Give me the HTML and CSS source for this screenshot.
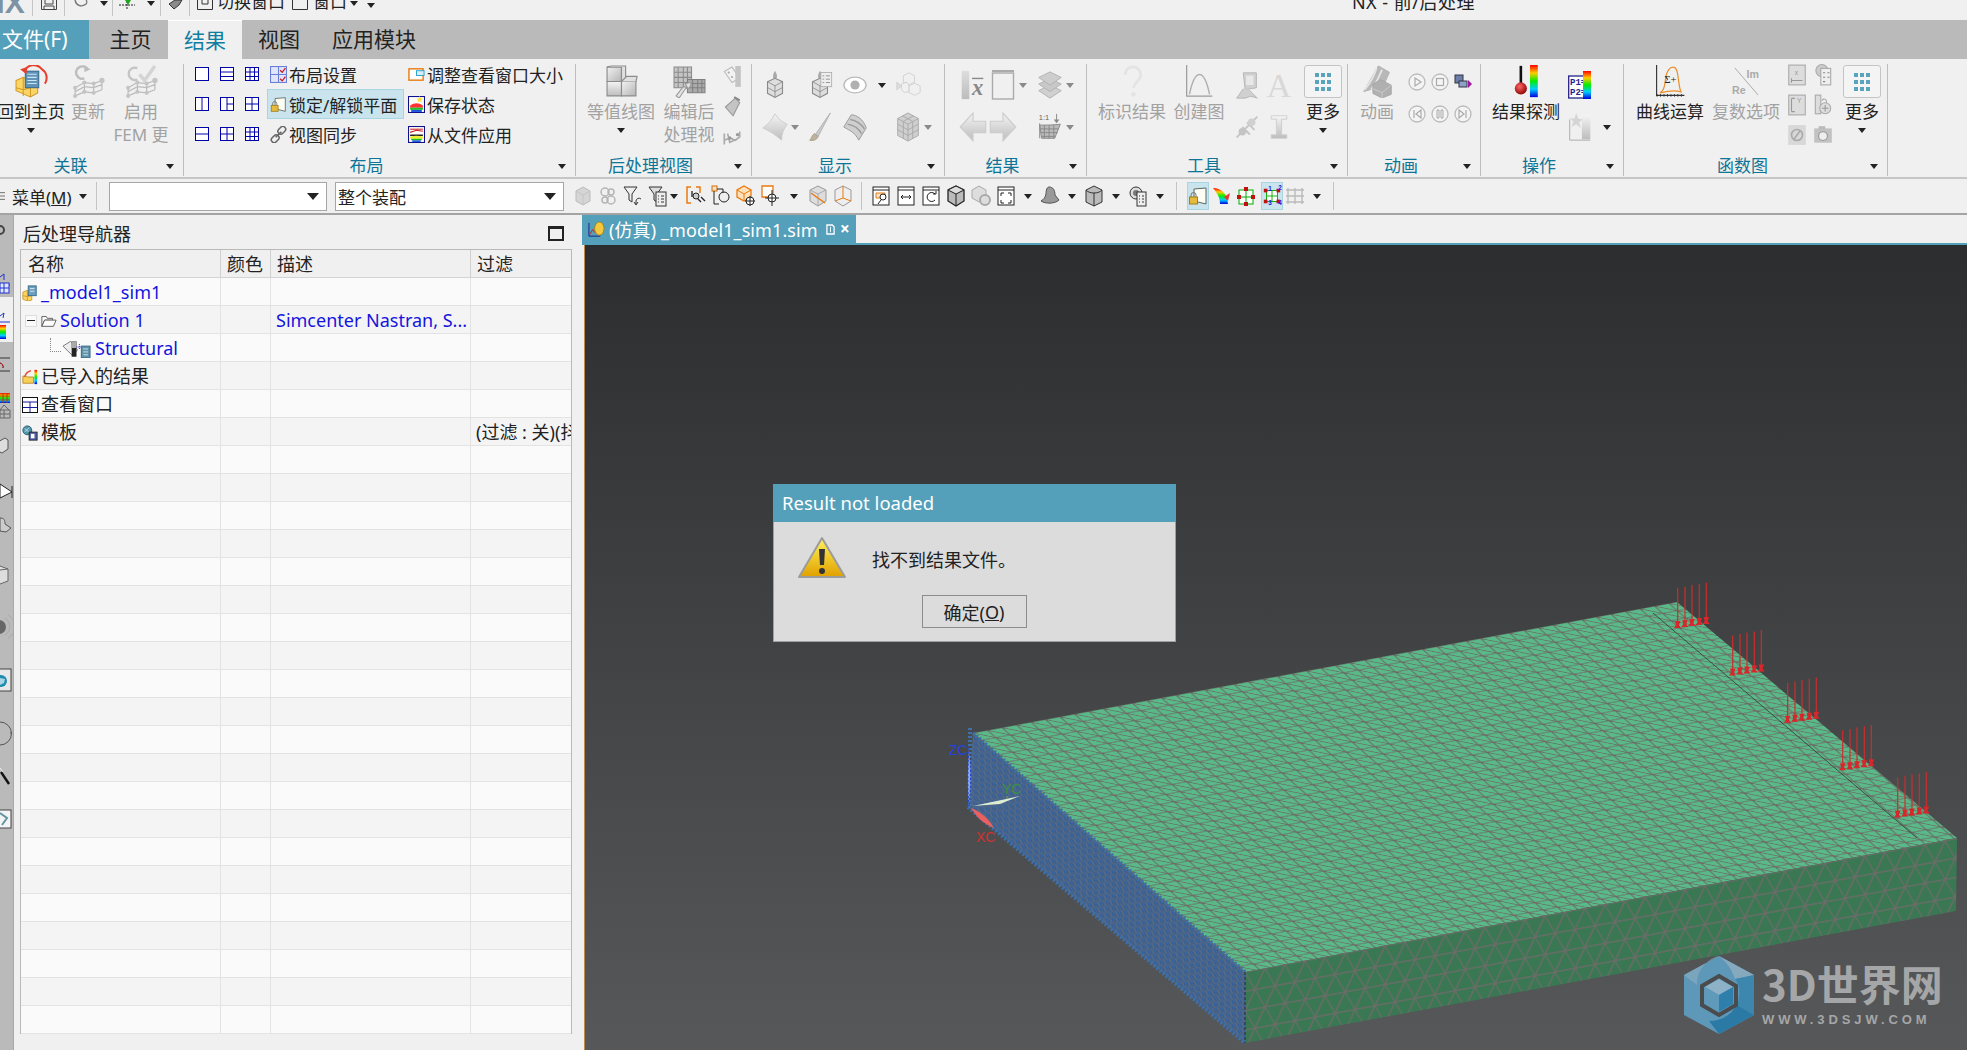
FILE: index.html
```html
<!DOCTYPE html>
<html lang="zh">
<head>
<meta charset="utf-8">
<title>NX - 前/后处理</title>
<link rel="stylesheet" href="styles.css">
</head>
<body>
<svg class="defs" xmlns="http://www.w3.org/2000/svg">
<defs>
<linearGradient id="gg" x1="0" y1="0" x2="1" y2="1"><stop offset="0" stop-color="#f2f2f2"/><stop offset="1" stop-color="#b4b4b4"/></linearGradient>
<linearGradient id="gv" x1="0" y1="0" x2="0" y2="1"><stop offset="0" stop-color="#f4f4f4"/><stop offset="1" stop-color="#bdbdbd"/></linearGradient>
<linearGradient id="rb" x1="0" y1="0" x2="0" y2="1"><stop offset="0" stop-color="#f00"/><stop offset=".25" stop-color="#fc0"/><stop offset=".5" stop-color="#0e0"/><stop offset=".75" stop-color="#0cf"/><stop offset="1" stop-color="#00d"/></linearGradient>
<radialGradient id="ball" cx=".4" cy=".35" r=".7"><stop offset="0" stop-color="#f66"/><stop offset="1" stop-color="#800"/></radialGradient>
<linearGradient id="warn" x1="0" y1="0" x2="0" y2="1"><stop offset="0" stop-color="#fff35a"/><stop offset="1" stop-color="#e0a000"/></linearGradient>
<symbol id="s-home" viewBox="0 0 32 32"><path d="M1 15l7-3 7 3v7l7-2 0 7-7 4-7-3-7-3z" fill="#fbd566" stroke="#d39a25"/><path d="M8 12v18M1 22l7 2 7-2M15 15v16" stroke="#d39a25" fill="none"/><rect x="10" y="6" width="13" height="16" fill="#5f93b8" stroke="#37688c"/><path d="M12 9h9M12 12h9M12 15h9M12 18h9" stroke="#cfe6f2"/><path d="M9 6a10 10 0 0 1 17-2 10 10 0 0 1 3 14" fill="none" stroke="#e8402c" stroke-width="2"/><path d="M5 4l7-2-1 7z" fill="#e8402c"/></symbol>
<symbol id="s-mesh" viewBox="0 0 32 32"><path d="M3 22l9-5 9 1 8-3M3 30l9-4 9 1 8-3M3 22v8M12 17v9M21 18v9M29 15v9M3 26l9-5 9 1 8-3" stroke="#bbb" fill="none" stroke-width="1.2"/><g fill="#c4c4c4"><circle cx="3" cy="22" r="2"/><circle cx="12" cy="17" r="2"/><circle cx="21" cy="18" r="2"/><circle cx="29" cy="15" r="2.600"/><circle cx="12" cy="26" r="2"/><circle cx="21" cy="27" r="2"/><circle cx="3" cy="30" r="2"/></g></symbol>
<symbol id="s-update" viewBox="0 0 32 32"><use href="#s-mesh"/><path d="M15 4a6 6 0 1 0-3 9" fill="none" stroke="#bdbdbd" stroke-width="2.400"/><path d="M12 1l6 3-6 3z" fill="#bdbdbd"/></symbol>
<symbol id="s-fem" viewBox="0 0 32 32"><use href="#s-mesh"/><path d="M12 3a6 6 0 1 0 0 11" fill="none" stroke="#c4c4c4" stroke-width="2.200"/><path d="M14 9l5 6L29 1" fill="none" stroke="#d4d4d4" stroke-width="3.400"/></symbol>
<symbol id="v1" viewBox="0 0 14 14"><rect x=".5" y=".5" width="13" height="13" fill="#fff" stroke="#00a" /></symbol>
<symbol id="v2" viewBox="0 0 14 14"><rect x=".5" y=".5" width="13" height="13" fill="#fff" stroke="#00a"/><path d="M0 5h14M0 9.500h14" stroke="#00a"/></symbol>
<symbol id="v3" viewBox="0 0 14 14"><rect x=".5" y=".5" width="13" height="13" fill="#fff" stroke="#00a"/><path d="M5 0v14M9.500 0v14M0 5h14M0 9.500h14" stroke="#00a"/></symbol>
<symbol id="v4" viewBox="0 0 14 14"><rect x=".5" y=".5" width="13" height="13" fill="#fff" stroke="#00a"/><path d="M7 0v14" stroke="#00a"/></symbol>
<symbol id="v5" viewBox="0 0 14 14"><rect x=".5" y=".5" width="13" height="13" fill="#fff" stroke="#00a"/><path d="M7 0v14M7 7h7" stroke="#00a"/></symbol>
<symbol id="v6" viewBox="0 0 14 14"><rect x=".5" y=".5" width="13" height="13" fill="#fff" stroke="#00a"/><path d="M7 0v14M0 7h14" stroke="#00a"/></symbol>
<symbol id="v7" viewBox="0 0 14 14"><rect x=".5" y=".5" width="13" height="13" fill="#fff" stroke="#00a"/><path d="M0 7h14" stroke="#00a"/></symbol>
<symbol id="s-layoutset" viewBox="0 0 16 16"><rect x=".5" y=".5" width="15" height="15" fill="#dfe6fb" stroke="#6a7fd8"/><path d="M8 0v16M0 8h16" stroke="#6a7fd8"/><path d="M9.500 4l2 2 3-4M9.500 12l2 2 3-4" fill="none" stroke="#d01818" stroke-width="1.200"/></symbol>
<symbol id="s-lock" viewBox="0 0 20 20"><path d="M6 3l12-1v16L6 15z" fill="#fdfdf4" stroke="#5d6760"/><path d="M3 11V9a2.500 2.500 0 0 1 5 0v2" fill="none" stroke="#777"/><rect x="1.500" y="11" width="8" height="7" fill="#e6bb3c" stroke="#a27f1d"/></symbol>
<symbol id="s-link" viewBox="0 0 18 18"><g fill="none" stroke="#666" stroke-width="1.600"><rect x="8" y="1.500" width="9" height="6" rx="3" transform="rotate(-45 12.500 4.500)"/><rect x="1" y="10.500" width="9" height="6" rx="3" transform="rotate(-45 5.500 13.500)"/><path d="M6 12l6-6"/></g></symbol>
<symbol id="s-resize" viewBox="0 0 18 16"><rect x="1" y="2" width="15" height="12" fill="#fff" stroke="#e87b10" stroke-width="1.500"/><rect x="9" y="4" width="8" height="5" fill="#d8eefa" stroke="#28a0c8"/></symbol>
<symbol id="s-save" viewBox="0 0 16 16"><rect x=".5" y=".5" width="15" height="15" fill="#fff" stroke="#10108a"/><path d="M2 9c4-3 8-3 12 0v2H2z" fill="#f33"/><path d="M2 11h12v2H2z" fill="#1ac41a"/><path d="M3 13h10v2H3z" fill="#1a50e0"/><path d="M11 0l1 2 2 .5-1.500 1.500.5 2-2-1-2 1 .5-2L8 2.500 10 2z" fill="#ffe23a"/></symbol>
<symbol id="s-apply" viewBox="0 0 16 16"><rect x=".5" y=".5" width="15" height="15" fill="#fff" stroke="#10108a"/><path d="M2 3h12" stroke="#c22"/><path d="M2 6l6-2 6 1" stroke="#c22" fill="none"/><path d="M2 8h12v1.500H2z" fill="#222"/><path d="M2 10c4-1 8-1 12 0v2H2z" fill="#ee3"/><path d="M3 12h10v1.500H3z" fill="#1ac41a"/><path d="M4 13.500h8V15H4z" fill="#1a50e0"/></symbol>
<symbol id="s-contour" viewBox="0 0 32 32"><g stroke="#8c8c8c" stroke-width="1.100"><path d="M2 16h14V2H2z" fill="url(#gg)"/><path d="M2 2l4-1h14v14l-4 1V2" fill="#e0e0e0"/><path d="M2 30h14V16H2z" fill="url(#gv)"/><path d="M16 30h14V16H16z" fill="url(#gg)"/><path d="M16 16l5-5h10v1l-1 4" fill="#e0e0e0"/></g></symbol>
<symbol id="s-edit" viewBox="0 0 32 32"><path d="M1 2h17v20H1z" fill="#c4c4c4" stroke="#8a8a8a"/><path d="M1 7h17M1 12h17M1 17h17M5 2v20M10 2v20M14 2v20" stroke="#8a8a8a"/><path d="M14 14h17v13H14z" fill="#aaa" stroke="#808080"/><path d="M14 18h17M14 22h17M19 14v13M24 14v13M28 14v13" stroke="#808080"/><path d="M3 30l7-9 4 1-2-4 6-1-2 5-4 1-6 9z" fill="#e4e4e4" stroke="#999"/></symbol>
<symbol id="s-tag" viewBox="0 0 16 20"><path d="M1 5l7-4 7 10-7 4z" fill="#f2f2f2" stroke="#bbb"/><rect x="11" y="0" width="5" height="19" fill="#c4c4c4"/><g fill="#aaa"><circle cx="5" cy="6" r="1"/><circle cx="8" cy="10" r="1"/></g></symbol>
<symbol id="s-brushg" viewBox="0 0 16 20"><path d="M2 10l9-8 4 4-6 12z" fill="#c4c4c4" stroke="#999"/><path d="M10 1l5 3" stroke="#888" stroke-width="2"/></symbol>
<symbol id="s-part" viewBox="0 0 16 20"><path d="M1 6v10M1 12l5-2 5 2 4-3v-5M4 6l2 8 4-2" stroke="#aaa" fill="none" stroke-width="1.500"/><g fill="#999"><circle cx="6" cy="10" r="1.500"/><circle cx="13" cy="7" r="1.500"/></g></symbol>
<symbol id="s-tower" viewBox="0 0 30 36"><path d="M15 1c2 3 3 6 2 9h-4c-1-3 0-6 2-9z" fill="#aaa"/><path d="M6 14l9-4 9 4v14l-9 5-9-5z" fill="#dedede" stroke="#8a8a8a" stroke-width="1.300"/><path d="M6 14l9 5 9-5M15 19v14M6 21l9 5 9-5" stroke="#8a8a8a" fill="none"/></symbol>
<symbol id="s-towerl" viewBox="0 0 30 36"><use href="#s-tower"/><rect x="16" y="3" width="13" height="17" fill="#eee" stroke="#aaa"/><path d="M18 7h2M22 7h5M18 11h2M22 11h5M18 15h2M22 15h5" stroke="#888"/></symbol>
<symbol id="s-eye" viewBox="0 0 26 20"><ellipse cx="13" cy="10" rx="12" ry="8.500" fill="#fff" stroke="#bbb" stroke-width="1.500"/><circle cx="13" cy="10" r="5" fill="#b0b0b0"/></symbol>
<symbol id="s-cubesl" viewBox="0 0 30 32"><g fill="#f0f0f0" stroke="#d0d0d0"><path d="M10 6l6-3 6 3v7l-6 3-6-3z"/><path d="M16 17l6-3 6 3v7l-6 3-6-3z"/><path d="M3 13l5 4-5 4z" fill="#ddd"/><path d="M8 15l6-2 2 3v7l-5 1-3-3z"/></g></symbol>
<symbol id="s-surf" viewBox="0 0 28 32"><path d="M14 2c3 5 8 9 13 11-4 5-6 11-6 17C14 24 8 20 1 17 7 13 11 8 14 2z" fill="url(#gv)" stroke="#ccc"/></symbol>
<symbol id="s-brush" viewBox="0 0 26 32"><path d="M24 1L8 24l3 2z" fill="#ccc" stroke="#b0b0b0"/><path d="M7 23c-3 2-3 6-5 7 3 1 8 0 9-4z" fill="#bdb29c" stroke="#a8a08c"/></symbol>
<symbol id="s-wave" viewBox="0 0 28 32"><path d="M10 3c6 0 13 5 16 14l-8 13C14 22 9 20 2 16z" fill="#cfcfcf" stroke="#999"/><path d="M6 13c6 1 11 3 15 10M9 8c6 1 11 4 15 10" stroke="#9a9a9a" fill="none" stroke-width="1.400"/></symbol>
<symbol id="s-cube3" viewBox="0 0 26 32"><path d="M13 1l11 6v18l-11 6-11-6V7z" fill="#cfcfcf" stroke="#aaa"/><path d="M2 7l11 6 11-6M13 13v18M2 13l11 6 11-6M2 19l11 6 11-6M7 4l11 6v18M19 4L8 10v18" stroke="#aaa" fill="none"/></symbol>
<symbol id="s-xbar" viewBox="0 0 24 32"><rect x="0" y="1" width="8" height="30" fill="url(#gv)"/><rect x="0" y="1" width="8" height="30" fill="#bbb" opacity=".4"/><path d="M11 9h12" stroke="#888" stroke-width="1.500"/><text x="11" y="27" class="ix">x</text></symbol>
<symbol id="s-box" viewBox="0 0 24 30"><path d="M1 1h22" stroke="#aaa" stroke-width="2"/><rect x="1.500" y="3" width="21" height="26" fill="#f0f0f0" stroke="#aaa" stroke-width="1.400"/></symbol>
<symbol id="s-layers" viewBox="0 0 26 32"><g fill="#d0d0d0" stroke="#b0b0b0"><path d="M13 16l12 6-12 8-12-8z"/><path d="M13 9l12 6-12 8-12-8z" fill="#c8c8c8"/><path d="M13 2l12 6-12 8L1 8z" fill="#cdcdcd"/></g></symbol>
<symbol id="s-aleft" viewBox="0 0 24 26"><path d="M1 13L12 1v7h11v10H12v7z" fill="url(#gv)" stroke="#ccc"/></symbol>
<symbol id="s-aright" viewBox="0 0 24 26"><path d="M23 13L12 1v7H1v10h11v7z" fill="url(#gv)" stroke="#ccc"/></symbol>
<symbol id="s-scale" viewBox="0 0 26 32"><text x="1" y="9" class="it">1:1</text><path d="M20 2v8" stroke="#888"/><path d="M17 8h6l-3 4z" fill="#888"/><path d="M2 12v16M2 14c8 0 14 0 22-1l-6 15H4z" fill="#bbb" stroke="#888"/><path d="M2 18h20M3 22h18M4 26h14M7 14v14M12 14v14M17 14v14" stroke="#888"/></symbol>
<symbol id="s-q" viewBox="0 0 24 36"><path d="M4 11c0-12 17-12 17 0 0 6-7 7-8 14" fill="none" stroke="#e4e4e4" stroke-width="3"/><circle cx="13" cy="32" r="2.500" fill="#e4e4e4"/></symbol>
<symbol id="s-chart" viewBox="0 0 30 36"><path d="M1 0v34h28" fill="none" stroke="#9a9a9a" stroke-width="1.300"/><path d="M4 32C10 3 20 3 26 32" fill="none" stroke="#b0b0b0" stroke-width="1.600"/></symbol>
<symbol id="s-cam" viewBox="0 0 28 32"><path d="M10 3h14v16l-12 2z" fill="#d0d0d0" stroke="#b5b5b5"/><path d="M13 6h8v10h-8z" fill="#e8e8e8"/><path d="M10 20l-7 10h9l6-2 7 2-9-9" fill="#d0d0d0" stroke="#b5b5b5"/></symbol>
<symbol id="s-nodes" viewBox="0 0 28 32"><path d="M3 27L25 5M9 16l8 8M14 11l8 8" stroke="#c4c4c4" stroke-width="2"/><circle cx="9" cy="21" r="4" fill="#c4c4c4"/><circle cx="19" cy="11" r="4" fill="#d0d0d0"/></symbol>
<symbol id="s-A" viewBox="0 0 26 32"><text x="0" y="29" class="iA">A</text></symbol>
<symbol id="s-I" viewBox="0 0 22 30"><path d="M2 2h18v4h-6v18h6v4H2v-4h6V6H2z" fill="url(#gv)" stroke="#ccc"/></symbol>
<symbol id="s-more" viewBox="0 0 16 18"><g fill="#5aa3bd"><rect width="4" height="4"/><rect x="6" width="4" height="4"/><rect x="12" width="4" height="4"/><rect y="7" width="4" height="4"/><rect x="6" y="7" width="4" height="4"/><rect x="12" y="7" width="4" height="4"/><rect y="14" width="4" height="4"/><rect x="6" y="14" width="4" height="4"/><rect x="12" y="14" width="4" height="4"/></g></symbol>
<symbol id="s-anim" viewBox="0 0 34 36"><path d="M18 1l12 7-8 18-10 0-10 3z" fill="#b8b8b8" stroke="#b0b0b0"/><path d="M16 3c-2 8-5 14-13 24M22 5c-3 8-6 14-12 22" stroke="#e4e4e4" stroke-width="2" fill="none"/><path d="M12 21l8-5 12 6v10l-10 4-10-5z" fill="#b0b0b0" stroke="#a4a4a4"/><path d="M12 26l10 4 10-8M22 30v6" stroke="#ccc" fill="none"/></symbol>
<symbol id="s-play" viewBox="0 0 18 18"><circle cx="9" cy="9" r="8" fill="#f4f4f4" stroke="#bbb" stroke-width="1.300"/><path d="M7 5l6 4-6 4z" fill="none" stroke="#aaa" stroke-width="1.200"/></symbol>
<symbol id="s-stop" viewBox="0 0 18 18"><circle cx="9" cy="9" r="8" fill="#f4f4f4" stroke="#bbb" stroke-width="1.300"/><rect x="5.500" y="5.500" width="7" height="7" fill="none" stroke="#aaa" stroke-width="1.200"/></symbol>
<symbol id="s-prev" viewBox="0 0 18 18"><circle cx="9" cy="9" r="8" fill="#f4f4f4" stroke="#bbb" stroke-width="1.300"/><path d="M6 5v8M13 5L8 9l5 4z" fill="none" stroke="#aaa" stroke-width="1.200"/></symbol>
<symbol id="s-pause" viewBox="0 0 18 18"><circle cx="9" cy="9" r="8" fill="#f4f4f4" stroke="#bbb" stroke-width="1.300"/><path d="M6 5h2v8H6zM10 5h2v8h-2z" fill="none" stroke="#aaa"/></symbol>
<symbol id="s-next" viewBox="0 0 18 18"><circle cx="9" cy="9" r="8" fill="#f4f4f4" stroke="#bbb" stroke-width="1.300"/><path d="M12 5v8M5 5l5 4-5 4z" fill="none" stroke="#aaa" stroke-width="1.200"/></symbol>
<symbol id="s-rec" viewBox="0 0 18 18"><rect x="1" y="2" width="8" height="8" fill="#6d7fa8" stroke="#334"/><rect x="5" y="8" width="8" height="6" fill="#8ca2c5" stroke="#334"/><path d="M14 7l4 4-4 4z" fill="#a018a0"/></symbol>
<symbol id="s-probe" viewBox="0 0 32 38"><rect x="8" y="1" width="3" height="20" fill="#111"/><circle cx="9.500" cy="27" r="7" fill="url(#ball)"/><rect x="20" y="0" width="9" height="37" fill="url(#rb)"/></symbol>
<symbol id="s-p12" viewBox="0 0 24 30"><rect x=".7" y="6" width="17" height="22" fill="#fff" stroke="#22228a" stroke-width="1.300"/><text x="2" y="15" class="ip">P1=</text><text x="2" y="25" class="ip">P2=</text><rect x="15" y="1" width="8" height="28" fill="url(#rb)"/></symbol>
<symbol id="s-star" viewBox="0 0 24 32"><rect x="14" y="3" width="9" height="26" fill="url(#gv)"/><path d="M1 8v22h22" fill="none" stroke="#aaa"/><path d="M8 1l2 6 5 1-4 3 2 6-5-4-5 3 2-6-4-3h5z" fill="#d5d5d5"/></symbol>
<symbol id="s-sigma" viewBox="0 0 34 38"><path d="M1 0v35h32" fill="none" stroke="#333" stroke-width="1.300"/><path d="M1 35h32" stroke="#333" stroke-dasharray="1 3" stroke-width="3"/><path d="M5 32C8 30 10 28 11 18 12 6 17 1 22 3c5 3 3 18 7 28-6-2-15-1-24 1z" fill="none" stroke="#e8902c" stroke-width="1.400"/><text x="10" y="21" class="is">Σ+</text></symbol>
<symbol id="s-imre" viewBox="0 0 30 34"><path d="M3 3l24 28" stroke="#aaa"/><text x="15" y="13" class="ii">Im</text><text x="0" y="30" class="ii">Re</text></symbol>
<symbol id="s-gx" viewBox="0 0 16 20"><rect x=".5" y="1" width="15" height="18" fill="#ddd" stroke="#aaa"/><path d="M3 15h10M3 13v4" stroke="#999"/><text x="6" y="10" class="ig">x</text></symbol>
<symbol id="s-gy" viewBox="0 0 16 20"><rect x=".5" y="1" width="15" height="18" fill="#ddd" stroke="#aaa"/><path d="M3 4v12M3 4h3M3 16h3" stroke="#999"/><text x="8" y="8" class="ig">Y</text></symbol>
<symbol id="s-gl" viewBox="0 0 16 20"><circle cx="7" cy="6" r="5.500" fill="#ccc" stroke="#aaa"/><rect x="6" y="4" width="9" height="15" fill="#eee" stroke="#aaa"/><path d="M8 8h2M12 8h2M8 12h2M12 12h2M8 16h2" stroke="#888"/></symbol>
<symbol id="s-gr" viewBox="0 0 16 20"><rect x="1" y="1" width="5" height="17" fill="#ddd" stroke="#aaa"/><path d="M7 6c2-3 5-1 4 3" stroke="#aaa" fill="none"/><circle cx="10" cy="13" r="5" fill="#ddd" stroke="#aaa"/><path d="M10 10v6M7 13h6" stroke="#999"/></symbol>
<symbol id="s-gn" viewBox="0 0 16 20"><rect y="1" width="16" height="18" fill="#d8d8d8"/><circle cx="8" cy="10" r="5" fill="none" stroke="#aaa" stroke-width="1.500"/><path d="M5 14l6-8" stroke="#aaa" stroke-width="1.500"/></symbol>
<symbol id="s-gc" viewBox="0 0 16 20"><rect y="4" width="16" height="13" fill="#c2c2c2"/><rect x="4" y="2" width="6" height="3" fill="#bbb"/><circle cx="8" cy="11" r="4" fill="#eee" stroke="#999"/></symbol>

<symbol id="t-cube" viewBox="0 0 20 22"><path d="M10 2l7 4v10l-7 4-7-4V6z" fill="#d5d5d5" stroke="#bbb"/><path d="M3 6l7 4 7-4M10 10v10" stroke="#c5c5c5" fill="none"/></symbol>
<symbol id="t-chain" viewBox="0 0 20 22"><g fill="none" stroke="#b5b5b5" stroke-width="1.500"><circle cx="7" cy="7" r="4"/><circle cx="13" cy="15" r="4"/><circle cx="13" cy="7" r="3"/><circle cx="7" cy="15" r="3"/></g></symbol>
<symbol id="t-funnel" viewBox="0 0 20 22"><path d="M1 2h13L9 9v8l-3-2V9z" fill="#eee" stroke="#333"/><path d="M18 14a3 3 0 0 0-5 2v3M11 17l2 3 2-3" fill="none" stroke="#333"/></symbol>
<symbol id="t-flist" viewBox="0 0 20 22"><path d="M1 2h13L9 9v8l-3-2V9z" fill="#ddd" stroke="#333"/><rect x="8" y="7" width="10" height="14" fill="#eee" stroke="#333"/><path d="M10 11h1M13 11h3M10 14h1M13 14h3M10 17h1M13 17h3" stroke="#333"/></symbol>
<symbol id="t-brk" viewBox="0 0 20 22"><path d="M5 2H1v16h4M10 2h4v6" fill="none" stroke="#e87b10" stroke-width="1.500"/><path d="M6 6v6M9 11l6 6M15 12l4 4" stroke="#222" stroke-width="1.300"/><circle cx="10" cy="11" r="3" fill="#ccc" stroke="#222"/></symbol>
<symbol id="t-tree" viewBox="0 0 20 22"><rect x="1" y="1" width="5" height="5" fill="#f4e0c4" stroke="#d96a00"/><path d="M3 6v13h5" fill="none" stroke="#222"/><circle cx="13" cy="12" r="5" fill="#eee" stroke="#222"/><path d="M6 4h6v4" stroke="#222" fill="none"/></symbol>
<symbol id="t-obox" viewBox="0 0 20 22"><path d="M8 1l7 4v7l-7 4-7-4V5z" fill="#ffe2bc" stroke="#e87b10" stroke-width="1.300"/><path d="M1 5l7 4 7-4M8 9v7" stroke="#e87b10" fill="none"/><circle cx="14" cy="16" r="4" fill="#fff" stroke="#222"/><path d="M14 11v10M9 16h10" stroke="#222"/></symbol>
<symbol id="t-ocross" viewBox="0 0 20 22"><path d="M1 1h11v11H1z" fill="#fff" stroke="#e87b10" stroke-width="1.300"/><circle cx="11" cy="13" r="4" fill="#fff" stroke="#222"/><path d="M11 5v16M4 13h14" stroke="#222"/></symbol>
<symbol id="t-cslash" viewBox="0 0 20 22"><path d="M10 1l8 4v11l-8 5-8-5V5z" fill="#ddd" stroke="#999"/><path d="M2 5l8 4 8-4M10 9v12" stroke="#aaa" fill="none"/><path d="M3 8l14 10" stroke="#e87b10" stroke-width="1.500"/></symbol>
<symbol id="t-cor" viewBox="0 0 20 22"><path d="M10 1l8 4v11l-8 5-8-5V5z" fill="#eee" stroke="#999"/><path d="M10 1v12l-8 3M10 13l8 3" stroke="#e87b10" fill="none"/></symbol>
<symbol id="t-w1" viewBox="0 0 20 22"><rect x="2" y="2" width="16" height="18" fill="#fff" stroke="#222"/><path d="M2 5h16" stroke="#222"/><path d="M5 8h9v5H5z" fill="#f7e3c8" stroke="#e87b10"/><circle cx="12" cy="12" r="3" fill="#fff" stroke="#222"/><path d="M10 15l-3 4" stroke="#222"/></symbol>
<symbol id="t-w2" viewBox="0 0 20 22"><rect x="2" y="2" width="16" height="18" fill="#fff" stroke="#222"/><path d="M2 5h16M5 12h10M5 12l2-2M5 12l2 2M15 12l-2-2M15 12l-2 2" stroke="#222" fill="none"/></symbol>
<symbol id="t-w3" viewBox="0 0 20 22"><rect x="2" y="2" width="16" height="18" fill="#fff" stroke="#222"/><path d="M2 5h16" stroke="#222"/><path d="M14 9a4.500 4.500 0 1 0 0 6" fill="none" stroke="#222"/><path d="M12 9h3V6" fill="none" stroke="#222"/></symbol>
<symbol id="t-dcube" viewBox="0 0 20 22"><path d="M10 1l8 4v11l-8 5-8-5V5z" fill="#bbb" stroke="#222" stroke-width="1.300"/><path d="M2 5l8 4 8-4-8-4z" fill="#ddd" stroke="#222"/><path d="M10 9v12" stroke="#222"/></symbol>
<symbol id="t-gcube" viewBox="0 0 20 22"><path d="M8 1l7 4v8l-7 4-7-4V5z" fill="#ddd" stroke="#aaa"/><circle cx="14" cy="15" r="5" fill="#ddd" stroke="#aaa" stroke-width="2"/></symbol>
<symbol id="t-w4" viewBox="0 0 20 22"><rect x="2" y="2" width="16" height="18" fill="#fff" stroke="#222"/><path d="M2 5h16M5 8v3M5 8h3M15 8v3M15 8h-3M5 18v-3M5 18h3M15 18v-3M15 18h-3" stroke="#222" fill="none"/></symbol>
<symbol id="t-sweep" viewBox="0 0 20 22"><path d="M9 2c4 0 6 3 6 8l4 5c-4 4-14 4-18 1 3-2 4-3 5-7 0-4 1-7 3-7z" fill="#999" stroke="#555"/></symbol>
<symbol id="t-cyl" viewBox="0 0 20 22"><path d="M2 5l8-4 8 4v12l-8 4-8-4z" fill="#bbb" stroke="#333"/><path d="M2 5c3 4 13 4 16 0M10 8v13" stroke="#333" fill="none"/></symbol>
<symbol id="t-glist" viewBox="0 0 20 22"><circle cx="8" cy="8" r="6" fill="#ddd" stroke="#333"/><circle cx="8" cy="8" r="3" fill="#777"/><rect x="9" y="7" width="9" height="14" fill="#eee" stroke="#333"/><path d="M11 11h1M14 11h2M11 14h1M14 14h2M11 17h1M14 17h2" stroke="#333"/></symbol>
<symbol id="t-rain" viewBox="0 0 20 22"><path d="M2 3c8 0 14 5 15 16H9C9 12 6 8 2 3z" fill="url(#rb)"/><path d="M19 8l-6 4 4 4z" fill="#e33"/></symbol>
<symbol id="t-rgrid" viewBox="0 0 20 22"><rect x="3" y="5" width="14" height="14" fill="#fff" stroke="#0a0"/><path d="M10 5v14M3 12h14" stroke="#0a0"/><g fill="#c01010"><rect x="8" y="2" width="4" height="4"/><rect x="1" y="10" width="4" height="4"/><rect x="15" y="10" width="4" height="4"/><rect x="8" y="17" width="4" height="4"/></g></symbol>
<symbol id="t-nums" viewBox="0 0 22 22"><rect x="5" y="5" width="12" height="12" fill="#fff" stroke="#0a0"/><path d="M5 11h12M11 5v12" stroke="#0a0"/><g fill="#c01010"><rect x="2" y="3" width="4" height="4"/><rect x="16" y="3" width="4" height="4"/><rect x="2" y="15" width="4" height="4"/><rect x="16" y="15" width="4" height="4"/></g><text x="7" y="5" class="in">1</text><text x="18" y="4" class="in">2</text><text x="7" y="21" class="in">3</text><text x="18" y="21" class="in">4</text></symbol>
<symbol id="t-grid" viewBox="0 0 20 22"><path d="M3 3v16M10 3v16M17 3v16M1 5h18M1 11h18M1 17h18" stroke="#bbb" stroke-width="1.400"/></symbol>

<symbol id="n-root" viewBox="0 0 18 18"><path d="M1 8l5-2 5 2v9l-5 1-5-2z" fill="#fbd566" stroke="#d39a25"/><path d="M1 12l5 1 5-1M6 6v12" stroke="#d39a25" fill="none"/><rect x="7" y="1" width="9" height="11" fill="#6da0bf" stroke="#37688c"/><path d="M9 4h5M9 7h5" stroke="#d6ecf7"/></symbol>
<symbol id="n-folder" viewBox="0 0 18 16"><path d="M1 14V3h5l1 2h6v2H4z" fill="#fff" stroke="#555"/><path d="M1 14l3-7h13l-3 7z" fill="#fdfdfd" stroke="#555"/></symbol>
<symbol id="n-struct" viewBox="0 0 30 18"><path d="M1 6l8-5 7 9-5 6z" fill="#eee" stroke="#777"/><rect x="10" y="1" width="5" height="16" fill="#222"/><rect x="10" y="1" width="5" height="7" fill="#aaa"/><path d="M15 7h6M18 4v5" stroke="#2222cc" stroke-dasharray="1 1"/><rect x="20" y="6" width="9" height="12" fill="#5f93a8" stroke="#37688c"/><path d="M22 9h5M22 12h5M22 15h5" stroke="#cde"/></symbol>
<symbol id="n-imp" viewBox="0 0 18 18"><path d="M1 16V8h4l1 1h7v7z" fill="#f9cf58" stroke="#b48a26"/><path d="M3 9c1-4 3-6 7-7" stroke="#e0503c" stroke-width="1.600" fill="none"/><rect x="14" y="1" width="3" height="16" fill="url(#rb)"/></symbol>
<symbol id="n-view" viewBox="0 0 16 16"><rect x=".5" y=".5" width="15" height="15" fill="#fff" stroke="#111"/><path d="M1 5h14M1 10.500h14M8 5v10" stroke="#1b1b9c"/></symbol>
<symbol id="n-tpl" viewBox="0 0 18 18"><circle cx="6" cy="6" r="5" fill="#4f98a9" stroke="#23586b"/><path d="M3 4l6 5M3 8l5-5" stroke="#cde"/><rect x="8" y="8" width="9" height="9" fill="#4c5fa8" stroke="#222"/><rect x="10" y="10" width="4" height="5" fill="#fff"/></symbol>
</defs>
</svg>

<div class="app">
  <header class="titlebar">
    <span class="logo">NX</span>
    <span class="tsep tsep-a"></span>
    <svg class="qs-save" viewBox="0 0 16 10"><path d="M.5 0v9.500h15V0M4 0v4h8V0M3 9V6h10v3" fill="none" stroke="#444"/></svg>
    <span class="tsep tsep-b"></span>
    <svg class="qs-undo" viewBox="0 0 16 10"><path d="M3 0c1 5 6 8 11 4 1-1 1-3 0-4" fill="none" stroke="#777" stroke-width="1.400"/></svg>
    <i class="caret qs-c1"></i>
    <span class="tsep tsep-c"></span>
    <svg class="qs-green" viewBox="0 0 16 10"><path d="M0 5h16M8 1v9" stroke="#222" stroke-dasharray="2 1"/><path d="M6 0h6l-3 5z" fill="#1aa81a"/></svg>
    <i class="caret qs-c2"></i>
    <span class="tsep tsep-d"></span>
    <svg class="qs-brush" viewBox="0 0 16 10"><path d="M1 4l6-4h7l-3 5-5 4z" fill="#8a8a8a" stroke="#333"/></svg>
    <span class="tsep tsep-e"></span>
    <svg class="qs-win" viewBox="0 0 16 10"><path d="M.5 0v9.500h15V0M5 0v4h6V0" fill="none" stroke="#333"/></svg>
    <span class="ttxt t-switch">切换窗口</span>
    <svg class="qs-win2" viewBox="0 0 16 10"><path d="M.5 0v9.500h15V0" fill="none" stroke="#333"/></svg>
    <span class="ttxt t-win">窗口</span>
    <i class="caret qs-c3"></i>
    <i class="caret qs-c4"></i>
    <span class="ttxt t-app">NX - 前/后处理</span>
  </header>

  <nav class="tabs">
    <span class="tab tab-file">文件(F)</span>
    <span class="tab tab-w79">主页</span>
    <span class="tab tab-w74 tab-on">结果</span>
    <span class="tab tab-w74">视图</span>
    <span class="tab tab-w116">应用模块</span>
  </nav>

  <section class="ribbon">
    <div class="grp g1">
      <div class="body">
        <div class="big w62"><svg class="ic32"><use href="#s-home"/></svg><span class="lb">回到主页</span><i class="caret"></i></div>
        <div class="big w52 dim"><svg class="ic32"><use href="#s-update"/></svg><span class="lb">更新</span></div>
        <div class="big w54 dim"><svg class="ic32"><use href="#s-fem"/></svg><span class="lb">启用</span><span class="lb nowrap">FEM 更</span></div>
      </div>
      <div class="foot"><span class="gname">关联</span><span class="fcar"><i class="caret"></i></span></div>
    </div>

    <div class="grp g2">
      <div class="body body-up">
        <div class="viewgrid">
          <svg class="ic14"><use href="#v1"/></svg><svg class="ic14"><use href="#v2"/></svg><svg class="ic14"><use href="#v3"/></svg>
          <svg class="ic14"><use href="#v4"/></svg><svg class="ic14"><use href="#v5"/></svg><svg class="ic14"><use href="#v6"/></svg>
          <svg class="ic14"><use href="#v7"/></svg><svg class="ic14"><use href="#v6"/></svg><svg class="ic14"><use href="#v3"/></svg>
        </div>
        <div class="rows r1">
          <div class="rw"><svg class="ic16"><use href="#s-layoutset"/></svg>布局设置</div>
          <div class="rw on"><svg class="ic16"><use href="#s-lock"/></svg>锁定/解锁平面</div>
          <div class="rw"><svg class="ic16"><use href="#s-link"/></svg>视图同步</div>
        </div>
        <div class="rows r2">
          <div class="rw"><svg class="ic16"><use href="#s-resize"/></svg>调整查看窗口大小</div>
          <div class="rw"><svg class="ic16"><use href="#s-save"/></svg>保存状态</div>
          <div class="rw"><svg class="ic16"><use href="#s-apply"/></svg>从文件应用</div>
        </div>
      </div>
      <div class="foot"><span class="gname">布局</span><span class="fcar"><i class="caret"></i></span></div>
    </div>

    <div class="grp g3">
      <div class="body">
        <div class="big w72 dim"><svg class="ic32"><use href="#s-contour"/></svg><span class="lb">等值线图</span><i class="caret"></i></div>
        <div class="big w52 dim"><svg class="ic32"><use href="#s-edit"/></svg><span class="lb">编辑后</span><span class="lb">处理视</span></div>
        <div class="col3"><svg class="ic18"><use href="#s-tag"/></svg><svg class="ic18"><use href="#s-brushg"/></svg><svg class="ic18"><use href="#s-part"/></svg></div>
      </div>
      <div class="foot"><span class="gname">后处理视图</span><span class="fcar"><i class="caret"></i></span></div>
    </div>

    <div class="grp g4">
      <div class="body grid-show">
        <svg class="ic28"><use href="#s-tower"/></svg><span></span><svg class="ic28"><use href="#s-towerl"/></svg><svg class="ic24"><use href="#s-eye"/></svg><i class="caret"></i><svg class="ic28"><use href="#s-cubesl"/></svg><span></span>
        <svg class="ic28"><use href="#s-surf"/></svg><i class="caret lt"></i><svg class="ic28"><use href="#s-brush"/></svg><svg class="ic28"><use href="#s-wave"/></svg><span></span><svg class="ic28"><use href="#s-cube3"/></svg><i class="caret lt"></i>
      </div>
      <div class="foot"><span class="gname">显示</span><span class="fcar"><i class="caret"></i></span></div>
    </div>

    <div class="grp g5">
      <div class="body grid-res">
        <svg class="ic28"><use href="#s-xbar"/></svg><svg class="ic28"><use href="#s-box"/></svg><i class="caret lt"></i><span></span><svg class="ic28"><use href="#s-layers"/></svg><i class="caret lt"></i>
        <svg class="ic28"><use href="#s-aleft"/></svg><svg class="ic28"><use href="#s-aright"/></svg><span></span><span></span><svg class="ic28"><use href="#s-scale"/></svg><i class="caret lt"></i>
      </div>
      <div class="foot"><span class="gname">结果</span><span class="fcar"><i class="caret"></i></span></div>
    </div>

    <div class="grp g6">
      <div class="body">
        <div class="big w70 dim"><svg class="ic32"><use href="#s-q"/></svg><span class="lb">标识结果</span></div>
        <div class="big w52 dim ml6"><svg class="ic32"><use href="#s-chart"/></svg><span class="lb">创建图</span></div>
        <div class="smgrid ml7">
          <svg class="ic28"><use href="#s-cam"/></svg><svg class="ic28"><use href="#s-A"/></svg>
          <svg class="ic28"><use href="#s-nodes"/></svg><svg class="ic24"><use href="#s-I"/></svg>
        </div>
        <div class="big w42 ml7"><span class="morebox"><svg class="ic-more"><use href="#s-more"/></svg></span><span class="lb">更多</span><i class="caret"></i></div>
      </div>
      <div class="foot"><span class="gname">工具</span><span class="fcar"><i class="caret"></i></span></div>
    </div>

    <div class="grp g7">
      <div class="body">
        <div class="big w40 dim"><svg class="ic32"><use href="#s-anim"/></svg><span class="lb">动画</span></div>
        <div class="playgrid">
          <svg class="ic18"><use href="#s-play"/></svg><svg class="ic18"><use href="#s-stop"/></svg><svg class="ic18"><use href="#s-rec"/></svg>
          <svg class="ic18"><use href="#s-prev"/></svg><svg class="ic18"><use href="#s-pause"/></svg><svg class="ic18"><use href="#s-next"/></svg>
        </div>
      </div>
      <div class="foot"><span class="gname">动画</span><span class="fcar"><i class="caret"></i></span></div>
    </div>

    <div class="grp g8">
      <div class="body">
        <div class="big w72"><svg class="ic32"><use href="#s-probe"/></svg><span class="lb">结果探测</span></div>
        <div class="opgrid">
          <svg class="ic28"><use href="#s-p12"/></svg><span></span>
          <svg class="ic28"><use href="#s-star"/></svg><i class="caret"></i>
        </div>
      </div>
      <div class="foot"><span class="gname">操作</span><span class="fcar"><i class="caret"></i></span></div>
    </div>

    <div class="grp g9">
      <div class="body">
        <div class="big w72"><svg class="ic32"><use href="#s-sigma"/></svg><span class="lb">曲线运算</span></div>
        <div class="big w72 dim ml4"><svg class="ic32"><use href="#s-imre"/></svg><span class="lb">复数选项</span></div>
        <div class="fngrid">
          <svg class="ic18"><use href="#s-gx"/></svg><svg class="ic18"><use href="#s-gl"/></svg>
          <svg class="ic18"><use href="#s-gy"/></svg><svg class="ic18"><use href="#s-gr"/></svg>
          <svg class="ic18"><use href="#s-gn"/></svg><svg class="ic18"><use href="#s-gc"/></svg>
        </div>
        <div class="big w42 ml5"><span class="morebox"><svg class="ic-more"><use href="#s-more"/></svg></span><span class="lb">更多</span><i class="caret"></i></div>
      </div>
      <div class="foot"><span class="gname">函数图</span><span class="fcar"><i class="caret"></i></span></div>
    </div>
  </section>

  <section class="toolbar">
    <svg class="burger" viewBox="0 0 6 12"><path d="M0 2h6M0 6h6M0 10h6" stroke="#555"/></svg>
    <span class="menu">菜单(<u>M</u>)</span><i class="caret menu-c"></i>
    <span class="vsep sep-menu"></span>
    <div class="combo c1"><i class="caret big-c"></i></div>
    <div class="combo c2"><span>整个装配</span><i class="caret big-c"></i></div>
    <div class="tools">
      <svg class="ti"><use href="#t-cube"/></svg><svg class="ti"><use href="#t-chain"/></svg><svg class="ti"><use href="#t-funnel"/></svg><svg class="ti"><use href="#t-flist"/></svg><i class="caret tc"></i>
      <svg class="ti m1"><use href="#t-brk"/></svg><svg class="ti"><use href="#t-tree"/></svg><svg class="ti"><use href="#t-obox"/></svg><svg class="ti"><use href="#t-ocross"/></svg><i class="caret tc-w1"></i>
      <svg class="ti"><use href="#t-cslash"/></svg><svg class="ti"><use href="#t-cor"/></svg>
      <span class="vsep sep-a"></span>
      <svg class="ti"><use href="#t-w1"/></svg><svg class="ti"><use href="#t-w2"/></svg><svg class="ti"><use href="#t-w3"/></svg><svg class="ti"><use href="#t-dcube"/></svg><svg class="ti"><use href="#t-gcube"/></svg><svg class="ti"><use href="#t-w4"/></svg><i class="caret tc-w2"></i>
      <svg class="ti"><use href="#t-sweep"/></svg><i class="caret tc-w2"></i>
      <svg class="ti"><use href="#t-cyl"/></svg><i class="caret tc-w2"></i>
      <svg class="ti"><use href="#t-glist"/></svg><i class="caret tc-w2"></i>
      <span class="vsep sep-b"></span>
      <span class="tog"><svg class="ti"><use href="#s-lock"/></svg></span><svg class="ti"><use href="#t-rain"/></svg><svg class="ti"><use href="#t-rgrid"/></svg>
      <span class="tog m3"><svg class="ti"><use href="#t-nums"/></svg></span><svg class="ti"><use href="#t-grid"/></svg><i class="caret tc-w3"></i>
      <span class="vsep sep-c"></span>
    </div>
  </section>

  <main class="main">
    <aside class="strip">
      <svg class="strip-svg" viewBox="0 215 13 835">
        <rect x="0" y="297" width="13" height="45" fill="#f0f0f0"/>
        <circle cx="0" cy="230" r="4" fill="none" stroke="#444" stroke-width="2"/>
        <path d="M0 277l4-3v6M0 285h10" stroke="#2233cc" fill="none"/><rect x="0" y="283" width="9" height="10" fill="#dfe8ff" stroke="#2233cc"/><path d="M4 283v10M0 288h9" stroke="#2233cc"/>
        <path d="M0 316l4-3-1 5M0 322h10" stroke="#2233cc" fill="none"/><rect x="0" y="325" width="6" height="14" fill="url(#rb)"/>
        <path d="M0 358h10M3 368a4 4 0 0 0-3-5M0 371h10" stroke="#333" fill="none"/><path d="M3 368a4 4 0 0 0-3-5" stroke="#c22" fill="none"/>
        <rect x="0" y="393" width="10" height="10" fill="url(#rb)"/><path d="M0 396h10M0 400h10M3 393v10M7 393v10" stroke="#a40"/><path d="M0 410l4-5 5 5M0 410h10v8H0zM4 410v8M0 414h10" stroke="#666" fill="none"/>
        <path d="M-2 442l7-4 3 2v9l-6 4-4-2z" fill="#ddd" stroke="#555"/>
        <path d="M0 484l12 8-12 6zM12 486v12" fill="#fff" stroke="#222"/>
        <path d="M0 518c4 0 5 2 5 6l6 4-5 4-6-1z" fill="#ccc" stroke="#555"/>
        <path d="M0 566l8 3v12l-8 3M0 570l8-1" fill="#ddd" stroke="#666"/>
        <circle cx="-1" cy="627" r="7" fill="#666"/><path d="M5 618a10 10 0 0 1 0 17M8 615a13 13 0 0 1 0 23" stroke="#aaa" fill="none"/>
        <rect x="-2" y="669" width="13" height="22" fill="#e8e8e8" stroke="#444"/><circle cx="1" cy="681" r="6" fill="#1f8cb0"/><path d="M0 678l5 1-1 4-4 2" fill="#a9d5e4"/>
        <path d="M0 722a11 11 0 0 1 0 23 M10 733h2" fill="none" stroke="#555"/>
        <path d="M1 772l8 12" stroke="#111" stroke-width="2.400"/><path d="M0 768l3 4" stroke="#eee"/>
        <rect x="-2" y="810" width="13" height="18" fill="#f4f4f4" stroke="#444"/><path d="M0 813l7 5-5 7" stroke="#5f96a3" stroke-width="2" fill="none"/>
      </svg>
    </aside>

    <section class="nav">
      <div class="nav-head"><span>后处理导航器</span><span class="maxbtn"></span></div>
      <div class="tbl">
        <div class="row hdr"><div class="c c-h1">名称</div><div class="c c-h2">颜色</div><div class="c c-h2">描述</div><div class="c c-h2">过滤</div></div>
        <div class="row"><div class="c t0"><svg class="ic16n"><use href="#n-root"/></svg><span class="blue m-name">_model1_sim1</span></div><div class="c"></div><div class="c"></div><div class="c"></div></div>
        <div class="row"><div class="c t1"><span class="toggle"></span><svg class="ic16n"><use href="#n-folder"/></svg><span class="blue">Solution 1</span></div><div class="c"></div><div class="c d"><span class="blue">Simcenter Nastran, S...</span></div><div class="c"></div></div>
        <div class="row"><div class="c t2"><span class="dots"></span><svg class="ic-st"><use href="#n-struct"/></svg><span class="blue">Structural</span></div><div class="c"></div><div class="c"></div><div class="c"></div></div>
        <div class="row"><div class="c t0"><svg class="ic16n"><use href="#n-imp"/></svg>已导入的结果</div><div class="c"></div><div class="c"></div><div class="c"></div></div>
        <div class="row"><div class="c t0"><svg class="ic16n"><use href="#n-view"/></svg>查看窗口</div><div class="c"></div><div class="c"></div><div class="c"></div></div>
        <div class="row"><div class="c t0"><svg class="ic16n"><use href="#n-tpl"/></svg>模板</div><div class="c"></div><div class="c"></div><div class="c d">(过滤 : 关)(抖动)</div></div>
        <div class="row"><div class="c"></div><div class="c"></div><div class="c"></div><div class="c"></div></div>
        <div class="row"><div class="c"></div><div class="c"></div><div class="c"></div><div class="c"></div></div>
        <div class="row"><div class="c"></div><div class="c"></div><div class="c"></div><div class="c"></div></div>
        <div class="row"><div class="c"></div><div class="c"></div><div class="c"></div><div class="c"></div></div>
        <div class="row"><div class="c"></div><div class="c"></div><div class="c"></div><div class="c"></div></div>
        <div class="row"><div class="c"></div><div class="c"></div><div class="c"></div><div class="c"></div></div>
        <div class="row"><div class="c"></div><div class="c"></div><div class="c"></div><div class="c"></div></div>
        <div class="row"><div class="c"></div><div class="c"></div><div class="c"></div><div class="c"></div></div>
        <div class="row"><div class="c"></div><div class="c"></div><div class="c"></div><div class="c"></div></div>
        <div class="row"><div class="c"></div><div class="c"></div><div class="c"></div><div class="c"></div></div>
        <div class="row"><div class="c"></div><div class="c"></div><div class="c"></div><div class="c"></div></div>
        <div class="row"><div class="c"></div><div class="c"></div><div class="c"></div><div class="c"></div></div>
        <div class="row"><div class="c"></div><div class="c"></div><div class="c"></div><div class="c"></div></div>
        <div class="row"><div class="c"></div><div class="c"></div><div class="c"></div><div class="c"></div></div>
        <div class="row"><div class="c"></div><div class="c"></div><div class="c"></div><div class="c"></div></div>
        <div class="row"><div class="c"></div><div class="c"></div><div class="c"></div><div class="c"></div></div>
        <div class="row"><div class="c"></div><div class="c"></div><div class="c"></div><div class="c"></div></div>
        <div class="row"><div class="c"></div><div class="c"></div><div class="c"></div><div class="c"></div></div>
        <div class="row"><div class="c"></div><div class="c"></div><div class="c"></div><div class="c"></div></div>
        <div class="row"><div class="c"></div><div class="c"></div><div class="c"></div><div class="c"></div></div>
        <div class="row"><div class="c"></div><div class="c"></div><div class="c"></div><div class="c"></div></div>
      </div>
    </section>

    <section class="work">
      <div class="doctabs">
        <div class="doctab">
          <svg class="doc-ic" viewBox="0 0 18 18"><path d="M1 2v14h12" stroke="#1a1a8a" fill="none"/><path d="M2 14l3-5 2 3 3-6" stroke="#c22" fill="none"/><ellipse cx="12" cy="8" rx="5" ry="7" fill="#f5c93c" stroke="#a27f1d"/></svg>
          <span class="doc-t">(仿真) _model1_sim1.sim</span>
          <svg class="doc-r" viewBox="0 0 10 12"><path d="M1 1h6l2 2v8H1z" fill="none" stroke="#fff" stroke-width="1.400"/><path d="M5 3v6" stroke="#fff"/></svg>
          <span class="doc-x">×</span>
        </div>
      </div>
      <div class="viewport">
        <svg class="scene" viewBox="584 245 1383 805" preserveAspectRatio="none">
          <defs>
            <pattern id="mt" patternUnits="userSpaceOnUse" width="100" height="100" patternTransform="matrix(.145 -.027 .083 .073 973 733)">
              <rect width="100" height="100" fill="#5ab988"/>
              <path d="M0 0H100M0 100H100M0 0V100M100 0V100M0 0L100 100" stroke="#6c6764" stroke-width="8" fill="none"/>
            </pattern>
            <pattern id="mf" patternUnits="userSpaceOnUse" width="100" height="100" patternTransform="matrix(.2 -.0375 .1 .175 1245 972)">
              <rect width="100" height="100" fill="#3a7753"/>
              <path d="M0 0H100M0 100H100M0 0V100M100 0V100M100 0L0 100" stroke="#6c6c68" stroke-width="6" fill="none"/>
            </pattern>
            <pattern id="mb" patternUnits="userSpaceOnUse" width="100" height="100" patternTransform="matrix(.06 .053 0 .06 973 733)">
              <rect width="100" height="100" fill="#33609a"/>
              <path d="M0 0H100M0 100H100M0 0V100M100 0V100M0 0L100 100" stroke="#5f6a7c" stroke-width="13" fill="none"/>
            </pattern>
            <g id="ld">
              <g stroke="#cc2d2d" stroke-width="1.200">
                <path d="M1677.700 588v38M1685 586.700v38M1692 585v38M1699.300 584v38M1706.300 582.700v38"/>
              </g>
              <g fill="#d8262a">
                <path d="M1675 621h5.500l-1.500 4 2 3h-7l2-3z"/><path d="M1682.300 620h5.500l-1.500 4 2 3h-7l2-3z"/><path d="M1689.300 619h5.500l-1.500 4 2 3h-7l2-3z"/><path d="M1696.600 618h5.500l-1.500 4 2 3h-7l2-3z"/><path d="M1703.600 617h5.500l-1.500 4 2 3h-7l2-3z"/>
              </g>
            </g>
          </defs>
          <polygon points="973,733 1677,602 1957,838 1245,972" fill="url(#mt)"/>
          <polygon points="1245,972 1957,838 1956,911 1245,1043" fill="url(#mf)"/>
          <polygon points="973,733 1245,972 1245,1043 968,807" fill="url(#mb)"/>
          <path d="M973 733L1245 972M968 807L1245 1043M970 728V808" fill="none" stroke="#3f70a8" stroke-width="4" stroke-dasharray="2 2"/>
          <path d="M1245 972V1043" stroke="#222a30" stroke-dasharray="3 2"/>
          <path d="M1653 613L1917 838" stroke="#2e3a32" stroke-width=".8"/>
          <use href="#ld"/><use href="#ld" x="55" y="47.400"/><use href="#ld" x="110" y="94.800"/><use href="#ld" x="165" y="142.200"/><use href="#ld" x="220" y="189.600"/>
          <path d="M969 806c-2-20-1-40 0-58 2 18 2 38 0 58z" fill="#8fa8e8" stroke="#1f3fd0" stroke-dasharray="2 2"/>
          <path d="M973 806l47-10-20 8z" fill="#dfeed0"/><path d="M1007 799v-3" stroke="#8a9a70"/>
          <path d="M971 808c8 3 17 9 23 20-10-4-17-10-23-20z" fill="#e86060"/>
          <text x="949" y="755" class="ax ax-z">ZC</text>
          <text x="1002" y="794" class="ax ax-y">YC</text>
          <text x="976" y="842" class="ax ax-x">XC</text>
        </svg>

        <div class="watermark">
          <svg class="wm-logo" viewBox="0 0 72 80">
            <path d="M36 1L71 20V60L36 79 1 60V20z" fill="#5e98b8"/>
            <path d="M36 1L71 20 52 24C48 12 42 6 36 1z" fill="#86a9be"/>
            <path d="M71 20V60L54 50C58 38 57 30 52 24z" fill="#3d86ad"/>
            <path d="M71 60L36 79 26 66c12 0 22-6 28-16z" fill="#2b7aa6"/>
            <path d="M36 1C26 4 14 12 14 30L1 20z" fill="#7ba4bd"/>
            <path d="M36 21L53 31V50L36 60 19 50V31z" fill="none" stroke="#4a4b4d" stroke-width="4"/>
            <path d="M36 24l14 8-14 8-14-8z" fill="#8db2c8"/><path d="M22 32l14 8v17l-14-8z" fill="#5f9abb"/><path d="M50 32v17l-14 8V40z" fill="#2f7fac"/>
          </svg>
          <div class="wm-text"><div class="wm-main">3D世界网</div><div class="wm-sub">WWW.3DSJW.COM</div></div>
        </div>

        <div class="dialog">
          <div class="dlg-title">Result not loaded</div>
          <div class="dlg-body">
            <svg class="dlg-ic" viewBox="0 0 48 44"><path d="M24 2L47 41H1z" fill="url(#warn)" stroke="#9c9c9c" stroke-width="2" stroke-linejoin="round"/><path d="M21 13h6l-1 16h-4z" fill="#333"/><circle cx="24" cy="35" r="3" fill="#333"/></svg>
            <span class="dlg-msg">找不到结果文件。</span>
          </div>
          <div class="dlg-foot"><span class="dlg-btn">确定(<u>O</u>)</span></div>
        </div>
      </div>
    </section>
  </main>
</div>
</body>
</html>
```

FILE: styles.css
```css
* { box-sizing: border-box; }
html, body { margin: 0; padding: 0; height: 100%; overflow: hidden; }
body { font-family: "Noto Sans", "Noto Sans CJK SC", sans-serif; font-size: 17px; color: #222; background: #f0f0f0; }
svg { display: block; flex: none; overflow: visible; }
.defs { position: absolute; width: 0; height: 0; }
.app { width: 1967px; height: 1050px; display: flex; flex-direction: column; overflow: hidden; }

/* svg text in icons */
.ix { font: italic 700 24px "Liberation Serif", serif; fill: #888; }
.it { font: 8px "Liberation Sans", sans-serif; fill: #666; }
.iA { font: 36px "Liberation Serif", serif; fill: #d8d8d8; }
.ip { font: 700 9px "Liberation Mono", monospace; fill: #22228a; }
.is { font: 12px "Liberation Serif", serif; fill: #222; }
.ii { font: 700 11px "Liberation Sans", sans-serif; fill: #aaa; }
.ig { font: 6px "Liberation Sans", sans-serif; fill: #999; }
.in { font: 700 7px "Liberation Sans", sans-serif; fill: #1a1ae0; }

/* carets */
.caret { display: block; flex: none; width: 0; height: 0; border-left: 4.5px solid transparent; border-right: 4.5px solid transparent; border-top: 5px solid #222; }
.caret.lt { border-top-color: #8a8a8a; }

/* title bar */
.titlebar { height: 20px; flex: none; display: flex; align-items: flex-start; overflow: visible; background: #f0f0f0; }
.logo { font: 700 30px/6px "Liberation Sans", sans-serif; color: #7d92a2; margin-left: -17px; width: 42px; height: 6px; }
.tsep { width: 1px; height: 16px; background: #c4c4c4; flex: none; }
.tsep-a { margin-left: 7px; } .tsep-b { margin-left: 7px; } .tsep-c { margin-left: 4px; } .tsep-d { margin-left: 5px; } .tsep-e { margin-left: 5px; }
.qs-save { width: 16px; height: 10px; margin-left: 8px; }
.qs-undo { width: 16px; height: 10px; margin-left: 7px; }
.qs-c1 { margin-left: 12px; margin-top: 1px; }
.qs-green { width: 16px; height: 10px; margin-left: 6px; }
.qs-c2 { margin-left: 12px; margin-top: 1px; }
.qs-brush { width: 16px; height: 10px; margin-left: 7px; }
.qs-win { width: 16px; height: 10px; margin-left: 7px; }
.qs-win2 { width: 16px; height: 10px; margin-left: 7px; }
.ttxt { font-size: 17px; line-height: 4px; height: 4px; white-space: nowrap; }
.t-switch { margin-left: 4px; width: 68px; }
.t-win { margin-left: 5px; width: 34px; }
.qs-c3 { margin-left: 3px; margin-top: 1px; }
.qs-c4 { margin-left: 9px; margin-top: 3px; }
.t-app { margin-left: auto; margin-right: 492px; font-size: 18px; letter-spacing: .5px; }

/* tabs */
.tabs { height: 39px; flex: none; display: flex; background: #bababa; font-size: 21px; }
.tab { display: flex; align-items: center; justify-content: center; color: #222; padding-bottom: 3px; }
.tab-file { width: 89px; background: #549fb9; color: #fff; justify-content: flex-start; padding-left: 2px; }
.tab-w79 { width: 79px; padding-left: 4px; } .tab-w74 { width: 74px; } .tab-w116 { width: 116px; }
.tab-on { background: #f0f0f0; color: #0f7ea0; border-top: 1px solid #fff; }

/* ribbon */
.ribbon { height: 120px; flex: none; display: flex; padding-top: 5px; background: #f0f0f0; border-bottom: 2px solid #c6c6c6; }
.grp { height: 112px; flex: none; display: flex; flex-direction: column; border-right: 1px solid #bdbdbd; }
.g1 { width: 200px; margin-left: -16px; }
.g2 { width: 392px; } .g3 { width: 176px; } .g4 { width: 193px; } .g5 { width: 142px; }
.g6 { width: 261px; } .g7 { width: 133px; } .g8 { width: 143px; } .g9 { width: 264px; }
.body { height: 92px; display: flex; flex: none; }
.body-up { margin-top: -5px; margin-bottom: 5px; }
.foot { height: 20px; flex: none; display: flex; align-items: center; }
.gname { flex: 1; text-align: center; color: #0f7597; font-size: 17px; line-height: 20px; }
.fcar { width: 26px; display: flex; justify-content: center; }

.g1 .body { padding-left: 16px; }
.g3 .body { padding-left: 9px; }
.g6 .body { padding-left: 10px; }
.g7 .body { padding-left: 9px; }
.g8 .body { padding-left: 9px; }
.g9 .body { padding-left: 10px; }

.big { display: flex; flex-direction: column; align-items: center; flex: none; }
.big .ic32 { margin-bottom: 2px; margin-top: 1px; }
.big .lb { line-height: 23px; white-space: nowrap; }
.big > .caret { margin-top: 5px; }
.dim { color: #a2a2a2; }
.w40 { width: 40px; } .w42 { width: 42px; } .w52 { width: 52px; } .w54 { width: 54px; } .w62 { width: 62px; } .w70 { width: 70px; } .w72 { width: 72px; }
.ml4 { margin-left: 4px; } .ml5 { margin-left: 5px; } .ml6 { margin-left: 6px; } .ml7 { margin-left: 7px; }
.g3 .w52 { margin-left: 6px; }

.ic32 { width: 33px; height: 33px; }
.ic28 { width: 28px; height: 30px; }
.ic24 { width: 24px; height: 26px; }
.ic18 { width: 18px; height: 22px; }
.ic16 { width: 17px; height: 17px; }
.ic14 { width: 14px; height: 14px; }
.ic-more { width: 16px; height: 18px; }
.morebox { width: 38px; height: 33px; border: 1px solid #c4c4c4; border-radius: 3px; background: #f4f4f4; display: flex; align-items: center; justify-content: center; margin-bottom: 2px; margin-top: 1px; }

.viewgrid { width: 75px; margin-left: 5px; display: grid; grid-template-columns: repeat(3, 25px); grid-auto-rows: 30px; place-items: center; }
.rows { display: grid; grid-auto-rows: 30px; flex: none; }
.r1 { width: 137px; margin-left: 3px; }
.r2 { margin-left: 1px; }
.rw { display: flex; align-items: center; gap: 2px; padding-left: 2px; white-space: nowrap; border: 1px solid transparent; }
.rw.on { background: #c9e4ec; border-color: #a9d5e2; }

.col3 { margin-left: 5px; width: 24px; display: grid; grid-template-rows: 28px 32px 30px; margin-top: -1px; place-items: center; align-content: start; }

.grid-show, .grid-res { display: grid; grid-auto-rows: 42px; align-items: center; justify-items: center; }
.grid-show { padding-left: 8px; grid-template-columns: 30px 10px 40px 30px 23px 30px 10px; }
.grid-res { padding-left: 13px; grid-template-columns: 30px 30px 10px 7px 30px 10px; }

.smgrid { width: 63px; display: grid; grid-template-columns: 30px 33px; grid-auto-rows: 42px; align-items: center; justify-items: center; flex: none; }
.playgrid { margin-left: 8px; display: grid; grid-template-columns: repeat(3, 23px); grid-auto-rows: 32px; margin-top: 2px; align-items: center; justify-items: center; height: 64px; }
.opgrid { margin-left: 3px; display: grid; grid-template-columns: 30px 24px; grid-auto-rows: 42px; align-items: center; justify-items: center; }
.fngrid { margin-left: 2px; display: grid; grid-template-columns: 26px 26px; grid-auto-rows: 30px; margin-top: -4px; align-items: center; justify-items: center; height: 94px; }

/* toolbar */
.toolbar { height: 36px; flex: none; display: flex; align-items: center; background: #f0f0f0; border-bottom: 2px solid #a4a4a4; }
.burger { width: 5px; height: 12px; }
.menu { margin-left: 7px; white-space: nowrap; width: 62px; }
.menu-c { margin-left: 5px; }
.vsep { width: 1px; height: 28px; background: #c4c4c4; flex: none; }
.sep-menu { margin-left: 9px; }
.combo { height: 29px; background: #fff; border: 1px solid #a6a6a6; display: flex; align-items: center; flex: none; padding: 0 7px 0 2px; }
.c1 { width: 218px; margin-left: 12px; }
.c2 { width: 229px; margin-left: 8px; }
.big-c { margin-left: auto; border-left-width: 6px; border-right-width: 6px; border-top-width: 7px; }
.tools { margin-left: 6px; display: flex; align-items: center; }
.ti { width: 20px; height: 22px; margin: 0 2.500px; }
.tc { margin: 0 1px 0 0; }
.tc-w1 { margin: 0 8px 0 6px; }
.tc-w2 { margin: 0 6px 0 5px; }
.tc-w3 { margin: 0 0 0 5px; }
.m1 { margin-left: 7px; }
.m3 { margin-left: 2px; }
.sep-a { margin: 0 7px 0 5px; }
.sep-b { margin: 0 10px 0 6px; }
.sep-c { margin-left: 12px; }
.tog { background: #c9e4ec; border: 1px solid #a9d5e2; height: 28px; width: 22px; display: flex; align-items: center; justify-content: center; }
.tog .ti { margin: 0; }

/* main */
.main { flex: 1; min-height: 0; display: flex; }
.strip { width: 14px; flex: none; background: #bababa; border-right: 1px solid #a8a8a8; overflow: hidden; }
.strip-svg { width: 13px; height: 835px; overflow: hidden; }
.nav { width: 568px; flex: none; padding: 0 10px 0 6px; overflow: hidden; font-size: 18px; }
.nav-head { height: 34px; display: flex; align-items: center; justify-content: space-between; padding: 2px 8px 0 3px; }
.maxbtn { width: 16px; height: 15px; border: 2px solid #222; border-top-width: 3px; }
.tbl { width: 552px; border-left: 1px solid #b9b9b9; border-top: 1px solid #b9b9b9; border-right: 1px solid #b9b9b9; background: #fafafa; }
.row { display: grid; grid-template-columns: 200px 50px 200px 100px; height: 28px; border-bottom: 1px solid #e3e3e3; }
.row:nth-child(odd) { background: #f4f4f4; }
.row.hdr { background: #f0f0f0; border-bottom: 1px solid #d4d4d4; }
.c { border-right: 1px solid #e3e3e3; display: flex; align-items: center; overflow: hidden; white-space: nowrap; line-height: 27px; padding-top: 2px; }
.c:last-child { border-right: 0; }
.hdr .c { border-right-color: #d0d0d0; }
.c-h1 { padding-left: 7px; }
.c-h2 { padding-left: 6px; }
.d { padding-left: 5px; }
.blue { color: #1414e0; }
.t0 { padding-left: 1px; gap: 3px; }
.t1 { padding-left: 4px; }
.t2 { padding-left: 29px; }
.ic16n { width: 16px; height: 16px; }
.m-name { margin-left: 0; }
.toggle { width: 12px; height: 12px; margin-right: 4px; background: linear-gradient(#222, #222) center / 8px 1px no-repeat #fafafa; border: 1px solid #ddd; flex: none; }
.t1 .ic16n { margin-right: 3px; }
.dots { width: 11px; height: 14px; margin-top: -8px; margin-right: 1px; border-left: 1px dotted #888; border-bottom: 1px dotted #888; flex: none; }
.ic-st { width: 29px; height: 18px; margin-right: 4px; }

/* work area */
.work { flex: 1; min-width: 0; display: flex; flex-direction: column; }
.doctabs { height: 30px; flex: none; border-bottom: 2px solid #549fb9; display: flex; }
.doctab { width: 274px; height: 28px; background: #549fb9; color: #fff; display: flex; align-items: center; padding-left: 6px; font-size: 18px; white-space: nowrap; }
.doc-ic { width: 17px; height: 17px; }
.doc-t { margin-left: 4px; width: 217px; letter-spacing: .1px; }
.doc-r { width: 9px; height: 11px; }
.doc-x { margin-left: 5px; font-weight: 700; font-size: 17px; line-height: 20px; }
.viewport { position: relative; flex: 1; margin-left: 2px; border-left: 1px solid #c08a4e; background: linear-gradient(#2c2d2f, #575859); overflow: hidden; }
.scene { position: absolute; left: -1px; top: 0; width: 1383px; height: 805px; }
.ax { font: 14px "Liberation Sans", sans-serif; }
.ax-z { fill: #2244e0; } .ax-y { fill: #3f8f3f; } .ax-x { fill: #cc3333; }

.watermark { position: absolute; left: 1098px; top: 710px; display: flex; align-items: flex-start; }
.wm-logo { width: 72px; height: 80px; }
.wm-text { margin-left: 7px; margin-top: 8px; color: #a5a6a8; }
.wm-main { font: 700 42px/40px "Noto Sans CJK SC", sans-serif; white-space: nowrap; height: 42px; }
.wm-sub { font: 700 13px/14px "Liberation Sans", sans-serif; letter-spacing: 3.900px; margin-top: 8px; white-space: nowrap; }

.dialog { position: absolute; left: 188px; top: 239px; width: 403px; height: 158px; background: #dcdcdc; border: 1px solid #a0a0a0; border-top: 0; display: flex; flex-direction: column; }
.dlg-title { height: 38px; flex: none; background: #549fb9; color: #fff; font-size: 18.500px; line-height: 38px; padding-left: 9px; margin: 0 -1px; }
.dlg-body { display: flex; align-items: center; height: 72px; padding-left: 24px; flex: none; }
.dlg-ic { width: 48px; height: 44px; }
.dlg-msg { margin-left: 26px; font-size: 18px; padding-top: 2px; }
.dlg-foot { display: flex; justify-content: center; margin-right: 1px; padding-top: 1px; }
.dlg-btn { width: 105px; height: 33px; border: 1px solid #8c8c8c; display: flex; align-items: center; justify-content: center; font-size: 18px; }
```
